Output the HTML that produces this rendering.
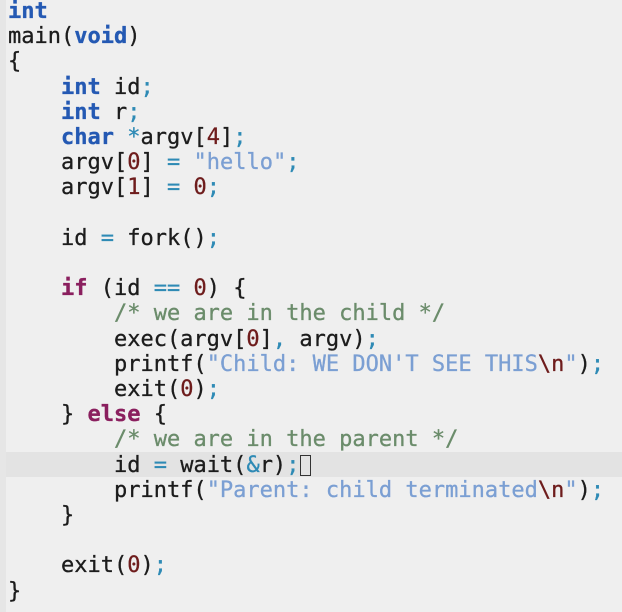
<!DOCTYPE html>
<html><head><style>
html,body{margin:0;padding:0;width:622px;height:612px;background:#efefef;overflow:hidden}
.gut{position:absolute;left:0;top:0;width:6px;height:612px;background:#e6e6e6}
.hl{position:absolute;left:6px;right:0;top:452px;height:25px;background:#e3e3e3}
pre{position:absolute;left:8px;top:-1px;margin:0;font-family:"DejaVu Sans Mono","Liberation Mono",monospace;font-size:22px;line-height:25.2px;color:#1c1c1c;-webkit-text-stroke:0.3px currentColor}
.t{color:#2459b3;font-weight:bold}
.k{color:#8a1f5e;font-weight:bold}
.p{color:#2e8ab5}
.n{color:#6e1c1c}
.s{color:#7b9fd3}
.e{color:#6e1c1c}
.c{color:#6b8c6b}
.cur{display:inline-block;width:11px;height:21px;border:1.5px solid #333;vertical-align:-4px;box-sizing:border-box;margin-left:1px;-webkit-text-stroke:0}
</style></head><body>
<div class="gut"></div><div class="hl"></div>
<pre><span class="t">int</span>
main(<span class="t">void</span>)
{
    <span class="t">int</span> id<span class="p">;</span>
    <span class="t">int</span> r<span class="p">;</span>
    <span class="t">char</span> <span class="p">*</span>argv[<span class="n">4</span>]<span class="p">;</span>
    argv[<span class="n">0</span>] <span class="p">=</span> <span class="s">"hello"</span><span class="p">;</span>
    argv[<span class="n">1</span>] <span class="p">=</span> <span class="n">0</span><span class="p">;</span>

    id <span class="p">=</span> fork()<span class="p">;</span>

    <span class="k">if</span> (id <span class="p">==</span> <span class="n">0</span>) {
        <span class="c">/* we are in the child */</span>
        exec(argv[<span class="n">0</span>]<span class="p">,</span> argv)<span class="p">;</span>
        printf(<span class="s">"Child: WE DON'T SEE THIS</span><span class="e">\n</span><span class="s">"</span>)<span class="p">;</span>
        exit(<span class="n">0</span>)<span class="p">;</span>
    } <span class="k">else</span> {
        <span class="c">/* we are in the parent */</span>
        id <span class="p">=</span> wait(<span class="p">&amp;</span>r)<span class="p">;</span><span class="cur"></span>
        printf(<span class="s">"Parent: child terminated</span><span class="e">\n</span><span class="s">"</span>)<span class="p">;</span>
    }

    exit(<span class="n">0</span>)<span class="p">;</span>
}</pre>
</body></html>
